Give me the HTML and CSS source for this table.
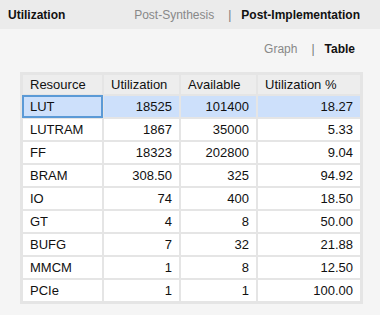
FILE: index.html
```html
<!DOCTYPE html>
<html lang="en">

<head>
  <meta charset="UTF-8">
  <title>Utilization</title>
  <link rel="stylesheet" href="styles.css">
</head>

<body>
  <div class="topbar">
    <span class="title">Utilization</span>
    <div class="tabs">
      <span class="tab">Post-Synthesis</span>
      <span class="sep">|</span>
      <span class="tab active">Post-Implementation</span>
    </div>
  </div>

  <div class="views">
    <span class="tab">Graph</span>
    <span class="sep">|</span>
    <span class="tab active">Table</span>
  </div>

  <div class="table-wrap">
    <table class="util-table">
      <thead>
        <tr>
          <th class="c-res">Resource</th>
          <th class="c-num">Utilization</th>
          <th class="c-num">Available</th>
          <th class="c-pct">Utilization %</th>
        </tr>
      </thead>
      <tbody>
        <tr class="selected">
          <td class="focus">LUT</td><td>18525</td><td>101400</td><td>18.27</td>
        </tr>
        <tr><td>LUTRAM</td><td>1867</td><td>35000</td><td>5.33</td></tr>
        <tr><td>FF</td><td>18323</td><td>202800</td><td>9.04</td></tr>
        <tr><td>BRAM</td><td>308.50</td><td>325</td><td>94.92</td></tr>
        <tr><td>IO</td><td>74</td><td>400</td><td>18.50</td></tr>
        <tr><td>GT</td><td>4</td><td>8</td><td>50.00</td></tr>
        <tr><td>BUFG</td><td>7</td><td>32</td><td>21.88</td></tr>
        <tr><td>MMCM</td><td>1</td><td>8</td><td>12.50</td></tr>
        <tr><td>PCIe</td><td>1</td><td>1</td><td>100.00</td></tr>
      </tbody>
    </table>
  </div>
</body>

</html>
```

FILE: styles.css
```css
* {
  margin: 0;
  padding: 0;
  box-sizing: border-box;
}

body {
  font-family: Arial, 'Liberation Sans', sans-serif;
  font-size: 13px;
  background-color: #f5f5f5;
  color: #111;
}

.topbar {
  height: 29px;
  background: #ebebeb;
  display: flex;
  align-items: center;
  justify-content: space-between;
  padding: 0 20px 0 8px;
}

.title {
  font-weight: bold;
  font-size: 12px;
}

.tabs,
.views {
  display: flex;
  align-items: center;
  font-size: 12px;
}

.tab {
  color: #888;
}

.tab.active {
  color: #111;
  font-weight: bold;
}

.sep {
  color: #777;
  margin: 0 10px 0 14px;
}

.views {
  justify-content: flex-end;
  height: 40px;
  padding-right: 25px;
}

.table-wrap {
  padding: 3px 0 0 20px;
}

.util-table {
  border-collapse: separate;
  border-spacing: 2px;
  background: #e5e5e5;
  border: 1px solid #e5e5e5;
}

.util-table th,
.util-table td {
  height: 21px;
  padding: 0 7px;
  background: #fff;
  text-align: right;
  font-weight: normal;
  white-space: nowrap;
}

.util-table th {
  height: 19px;
  text-align: left;
  background: #ededed;
}

.util-table td:first-child {
  text-align: left;
}

.c-res {
  width: 79px;
}

.c-num {
  width: 75px;
}

.c-pct {
  width: 102px;
}

.util-table tr.selected td {
  background: #cde0fb;
}

.util-table td.focus {
  outline: 2px solid #5b9ad6;
  outline-offset: -1px;
}
```
